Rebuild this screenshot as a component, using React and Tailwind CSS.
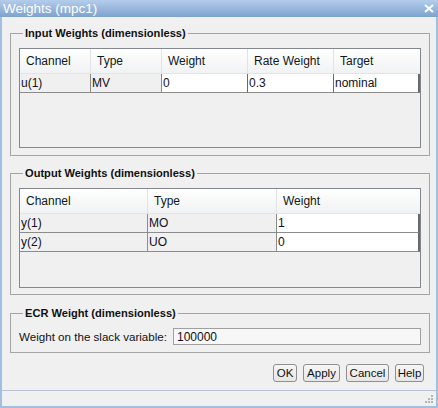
import React from "react";

const font = { fontFamily: '"Liberation Sans", Arial, sans-serif' };

const HeaderCell = ({ label, last }) => (
  <div
    className={
      "h-[25px] flex items-center pl-[6px] text-[12px] text-[#101820] bg-gradient-to-b from-white to-[#f1f2f4] border-b border-[#e2e4e7] " +
      (last ? "" : "border-r border-r-[#dfe2e6]")
    }
  >
    {label}
  </div>
);

const GrayCell = ({ value }) => (
  <div className="h-[19px] flex items-center pl-[1px] text-[12px] text-[#101020] bg-[#f0f0f0] border-b border-r border-[#8c8c8c]">
    {value}
  </div>
);

const EditCell = ({ value, last }) => (
  <div
    className={
      "h-[19px] flex items-center pl-[1px] text-[12px] text-[#101020] bg-white border-b border-[#8c8c8c] " +
      (last ? "border-r-2 border-r-[#6a6a6a]" : "border-r border-r-[#6a6a6a]")
    }
  >
    {value}
  </div>
);

const Group = ({ title, className, children }) => (
  <fieldset className={"border border-[#a5a5a5] px-[8px] " + className}>
    <legend className="ml-[4px] px-[2px] text-[11.1px] font-bold leading-[14px] text-[#101010]">{title}</legend>
    {children}
  </fieldset>
);

const Btn = ({ label, w }) => (
  <button
    className={
      "h-[18px] rounded-[3px] border border-[#8e8f8f] bg-gradient-to-b from-[#f6f6f6] to-[#e6e6e6] text-[11.5px] text-[#111] flex items-center justify-center " +
      w
    }
  >
    {label}
  </button>
);

export default function App() {
  const inputRows = [["u(1)", "MV", "0", "0.3", "nominal"]];
  const outputRows = [
    ["y(1)", "MO", "1"],
    ["y(2)", "UO", "0"],
  ];

  return (
    <div className="w-[438px] h-[408px] flex flex-col bg-[#a3bfe0]" style={font}>
      {/* title bar */}
      <div className="h-[17px] flex items-center justify-between pl-[3px] pr-[4px] bg-gradient-to-b from-[#b4cdeb] to-[#7ea2cf] text-white">
        <span className="text-[13.5px] leading-none">Weights (mpc1)</span>
        <svg width="10" height="9" viewBox="0 0 10 9">
          <path d="M1 1 L9 8 M9 1 L1 8" stroke="white" strokeWidth="2" />
        </svg>
      </div>

      <div className="flex-1 mx-[2px] mb-[2px] bg-[#f0f0f0] flex flex-col">
        <div className="pt-[9px] pl-[8px] pr-[6px] flex flex-col">
          <Group title="Input Weights (dimensionless)" className="pb-[7px]">
            <div className="mt-[8px] h-[100px] border border-[#828790] bg-[#f0f0f0]">
              <div className="grid grid-cols-[71px_71px_86px_86px_86px]">
                {["Channel", "Type", "Weight", "Rate Weight", "Target"].map((h, i) => (
                  <HeaderCell key={h} label={h} last={i === 4} />
                ))}
                {inputRows.map((r) => (
                  <React.Fragment key={r[0]}>
                    <GrayCell value={r[0]} />
                    <GrayCell value={r[1]} />
                    <EditCell value={r[2]} />
                    <EditCell value={r[3]} />
                    <EditCell value={r[4]} last />
                  </React.Fragment>
                ))}
              </div>
            </div>
          </Group>

          <Group title="Output Weights (dimensionless)" className="mt-[10px] pb-[6px]">
            <div className="mt-[8px] h-[100px] border border-[#828790] bg-[#f0f0f0]">
              <div className="grid grid-cols-[128px_129px_143px]">
                {["Channel", "Type", "Weight"].map((h, i) => (
                  <HeaderCell key={h} label={h} last={i === 2} />
                ))}
                {outputRows.map((r) => (
                  <React.Fragment key={r[0]}>
                    <GrayCell value={r[0]} />
                    <GrayCell value={r[1]} />
                    <EditCell value={r[2]} last />
                  </React.Fragment>
                ))}
              </div>
            </div>
          </Group>

          <Group title="ECR Weight (dimensionless)" className="mt-[11px] pb-[7px]">
            <div className="mt-[8px] flex items-center">
              <span className="w-[154px] text-[11.6px] text-[#101020]">Weight on the slack variable:</span>
              <div className="flex-1 h-[17px] border border-[#a0a0a0] bg-[#f7f7f7] flex items-center pl-[3px] text-[12px] text-[#101020]">
                100000
              </div>
            </div>
          </Group>
        </div>

        <div className="mt-[11px] flex justify-end gap-[6px] pr-[12px]">
          <Btn label="OK" w="w-[24px]" />
          <Btn label="Apply" w="w-[37px]" />
          <Btn label="Cancel" w="w-[43px]" />
          <Btn label="Help" w="w-[29px]" />
        </div>

        <div className="mt-auto h-[16px] border-t border-[#b5c4d4] flex items-end justify-end pr-[2px] pb-[2px]">
          <svg width="10" height="10" viewBox="0 0 10 10">
            {[
              [8, 2],
              [5, 5],
              [8, 5],
              [2, 8],
              [5, 8],
              [8, 8],
            ].map(([x, y]) => (
              <rect key={x + "-" + y} x={x - 1} y={y - 1} width="2" height="2" fill="#b4b4b4" />
            ))}
          </svg>
        </div>
      </div>
    </div>
  );
}
